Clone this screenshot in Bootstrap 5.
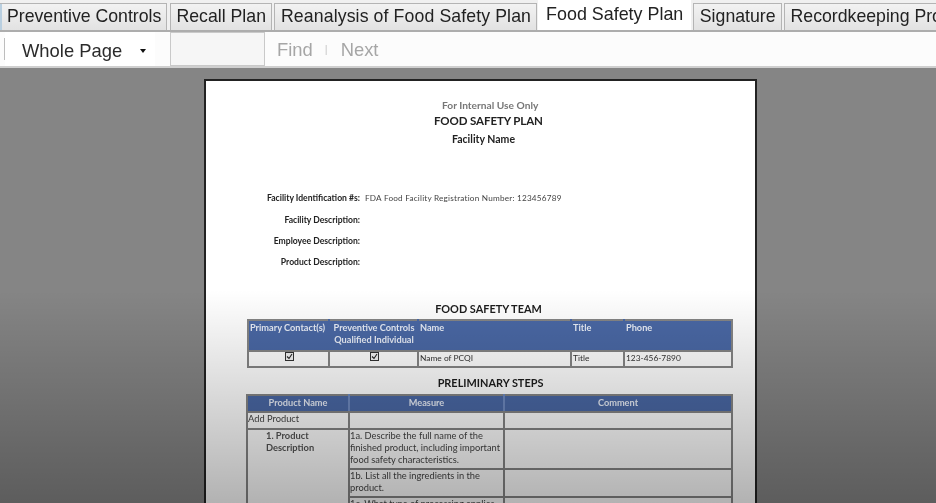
<!DOCTYPE html>
<html lang="en">
<head>
<meta charset="utf-8">
<title>Food Safety Plan</title>
<link href="https://cdn.jsdelivr.net/npm/bootstrap@5.3.0/dist/css/bootstrap.min.css" rel="stylesheet">
<style>
html,body{height:503px;overflow:hidden}
body{background:#858585;font-family:"Liberation Sans",Arial,sans-serif;position:relative}
.tabstrip{height:32px;background:#f0f0f0;border-bottom:2px solid #adadad;gap:2px;overflow:hidden;white-space:nowrap;filter:blur(.3px)}
.tabitem{height:27px;margin-top:3px;padding:0 5.5px;font-size:17.7px;line-height:24px;color:#222;background:linear-gradient(#f2f2f2,#e2e2e2);border:1px solid #b4b4b4;border-bottom:0;flex:none}
.tabitem.first{margin-left:-1px;margin-right:1px;padding-left:8px;padding-right:5px;width:168px;border-left:0;box-shadow:inset 3px 0 0 #b9cfe0}
.tabitem.longtab{letter-spacing:.11px;padding-right:5px}
.tabitem.current{height:30px;margin-top:0;margin-left:-1px;background:#fff;border-color:#fff;line-height:26px;padding:0 7px;font-size:17.9px}
.toolstrip{height:36px;background:#fcfcfc;border-bottom:2px solid #cfcfcf;padding-left:4px;filter:blur(.3px)}
.toolsep{width:1px;height:22px;background:#bdbdbd}
.zoomsel{width:150px;height:34px;background:#fff;padding-left:17px;font-size:18.4px;color:#2b2b2b;padding-top:4px}
.zoomcaret{width:0;height:0;border-left:3.5px solid transparent;border-right:3.5px solid transparent;border-top:4px solid #111;margin-left:18px}
.findbox{width:95px;height:34px;margin-left:15px;background:#f6f6f6;border:1px solid #c9c9c9}
.findword{font-size:18.4px;color:#a6a6a6;padding-top:2px}
.findfirst{margin-left:12px}
.findbar{color:#c8c8c8;font-size:11px;margin:0 13px 0 12px}
.viewer{padding:11px 0 0 204px}
.docpage{width:553px;height:600px;background:#fff;border:solid #222;border-width:2px 2px 0 2px;font-family:Lato,"Liberation Sans",sans-serif;color:#222;filter:blur(.45px);padding-top:19px}
.docgrey{font-size:10.2px;font-weight:700;color:#777;margin-left:236px;line-height:13px;margin-top:-1px}
.docplan{font-size:11.5px;font-weight:700;margin-left:228px;line-height:16px;margin-top:1px;letter-spacing:-.1px}
.docname{font-size:10.5px;font-weight:700;margin-left:246px;line-height:14px;margin-top:3px}
.fieldgroup{margin-top:46px;font-size:8.6px}
.fieldrow{height:21px;line-height:12px}
.fieldrow.firstfield{height:22px}
.fieldlabel{width:154px;text-align:right;font-weight:700;color:#222}
.fieldvalue{margin-left:5px;color:#444;font-size:8.2px;letter-spacing:.21px}
.sectionhead{font-size:10.9px;font-weight:700;line-height:14px;text-align:center;color:#1d1d1d;margin-left:16px}
.teamhead{margin-top:25px}
.stepshead{margin-top:8px;margin-left:20px}
.sheet{table-layout:fixed;margin:0;font-size:8.4px;--bs-table-bg:transparent;--bs-table-border-color:#858585;border-color:#858585}
.sheet>*>tr>*{padding:0;border-width:2px;line-height:12px;vertical-align:top;color:#333}
.sheet.teamsheet{width:484px;margin-left:41px;margin-top:3px}
.sheet.stepsheet{width:485px;margin-left:40px;margin-top:4px;font-size:9.3px}
.sheet thead th{background:#4a68a5;color:#e8edf7;font-weight:700;--bs-table-color:#e8edf7;font-size:9.2px}
.teamsheet thead tr{height:31px}
.teamsheet thead th{padding-top:1px;padding-left:1px;border-left-color:#4a68a5;border-right-color:#4a68a5}
.teamsheet thead th:first-child{border-left-color:#858585}
.teamsheet thead th:last-child{border-right-color:#858585}
.teamsheet tbody tr{height:16px}
.teamsheet tbody td{padding-top:0;padding-left:1px}
.stepsheet thead tr{height:17px}
.stepsheet thead th{text-align:center;padding-top:1px;border-left-color:#6f8ac0;border-right-color:#6f8ac0}
.stepsheet thead th:first-child{border-left-color:#858585}
.stepsheet thead th:last-child{border-right-color:#858585}
.stepsheet tbody td{padding-top:0;white-space:nowrap;overflow:hidden;color:#444}
.rowadd{height:17px}
.row1a{height:40px}
.row1b{height:28px}
.row1c{height:40px}
.stepsheet tbody td.productcell{padding-left:18px;font-weight:700;color:#555;padding-top:0}
.tick{display:block;margin:0 auto}
.fade-shade{position:absolute;left:0;right:0;top:290px;bottom:0;background:linear-gradient(rgba(0,0,0,0),rgba(0,0,0,.3));pointer-events:none}
</style>
</head>
<body>
<div class="tabstrip d-flex align-items-start">
  <div class="tabitem first">Preventive Controls</div>
  <div class="tabitem">Recall Plan</div>
  <div class="tabitem longtab">Reanalysis of Food Safety Plan</div>
  <div class="tabitem current">Food Safety Plan</div>
  <div class="tabitem">Signature</div>
  <div class="tabitem">Recordkeeping Procedures</div>
</div>
<div class="toolstrip d-flex align-items-center">
  <div class="toolsep"></div>
  <div class="zoomsel d-flex align-items-center"><span>Whole Page</span><span class="zoomcaret"></span></div>
  <div class="findbox"></div>
  <span class="findword findfirst">Find</span><span class="findbar">|</span><span class="findword">Next</span>
</div>
<main class="viewer">
  <div class="docpage">
    <div class="docgrey">For Internal Use Only</div>
    <div class="docplan">FOOD SAFETY PLAN</div>
    <div class="docname">Facility Name</div>
    <div class="fieldgroup">
      <div class="fieldrow firstfield d-flex"><span class="fieldlabel">Facility Identification #s:</span><span class="fieldvalue">FDA Food Facility Registration Number: 123456789</span></div>
      <div class="fieldrow d-flex"><span class="fieldlabel">Facility Description:</span></div>
      <div class="fieldrow d-flex"><span class="fieldlabel">Employee Description:</span></div>
      <div class="fieldrow d-flex"><span class="fieldlabel">Product Description:</span></div>
    </div>
    <div class="sectionhead teamhead">FOOD SAFETY TEAM</div>
    <table class="table table-bordered sheet teamsheet">
      <colgroup><col style="width:81px"><col style="width:89px"><col style="width:153px"><col style="width:53px"><col style="width:108px"></colgroup>
      <thead><tr><th class="text-nowrap">Primary Contact(s)</th><th class="text-center">Preventive Controls Qualified Individual</th><th>Name</th><th>Title</th><th>Phone</th></tr></thead>
      <tbody><tr>
        <td><svg class="tick" width="9" height="9" viewBox="0 0 9 9"><rect x=".5" y=".5" width="8" height="8" fill="#f4f4f4" stroke="#333"/><path d="M2 4.5l2 2 3-4.5" fill="none" stroke="#222" stroke-width="1.1"/></svg></td>
        <td><svg class="tick" width="9" height="9" viewBox="0 0 9 9"><rect x=".5" y=".5" width="8" height="8" fill="#f4f4f4" stroke="#333"/><path d="M2 4.5l2 2 3-4.5" fill="none" stroke="#222" stroke-width="1.1"/></svg></td>
        <td>Name of PCQI</td><td>Title</td><td>123-456-7890</td>
      </tr></tbody>
    </table>
    <div class="sectionhead stepshead">PRELIMINARY STEPS</div>
    <table class="table table-bordered sheet stepsheet">
      <colgroup><col style="width:102px"><col style="width:155px"><col style="width:228px"></colgroup>
      <thead><tr><th>Product Name</th><th>Measure</th><th>Comment</th></tr></thead>
      <tbody>
        <tr class="rowadd"><td>Add Product</td><td></td><td></td></tr>
        <tr class="row1a"><td rowspan="3" class="productcell">1. Product<br>Description</td><td>1a. Describe the full name of the<br>finished product, including important<br>food safety characteristics.</td><td></td></tr>
        <tr class="row1b"><td>1b. List all the ingredients in the<br>product.</td><td></td></tr>
        <tr class="row1c"><td>1c. What type of processing applies</td><td></td></tr>
      </tbody>
    </table>
  </div>
</main>
<div class="fade-shade"></div>
<script src="https://cdn.jsdelivr.net/npm/bootstrap@5.3.0/dist/js/bootstrap.bundle.min.js"></script>
</body>
</html>
